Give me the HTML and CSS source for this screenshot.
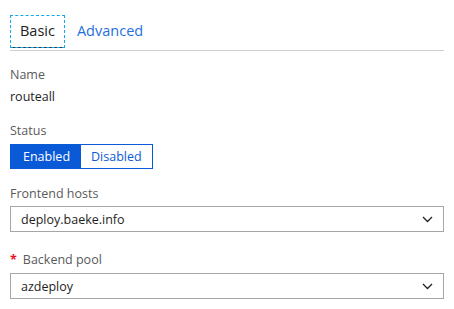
FILE: index.html
```html
<!DOCTYPE html>
<html lang="en">
<head>
  <meta charset="UTF-8" />
  <title>Routing rule</title>
  <link rel="stylesheet" href="styles.css">
</head>
<body>
  <div class="panel">
    <div class="tabs">
      <div class="tab tab-active">Basic</div>
      <div class="tab">Advanced</div>
    </div>

    <div class="field field-first">
      <div class="label">Name</div>
      <div class="value">routeall</div>
    </div>

    <div class="field">
      <div class="label">Status</div>
      <div class="toggle">
        <span class="toggle-opt toggle-on">Enabled</span>
        <span class="toggle-opt">Disabled</span>
      </div>
    </div>

    <div class="field field-hosts">
      <div class="label">Frontend hosts</div>
      <div class="select">
        <span>deploy.baeke.info</span>
        <svg class="chevron" width="11" height="7" viewBox="0 0 11 7"><path d="M1 1 L5.5 5.5 L10 1" fill="none" stroke="#222" stroke-width="1.3"/></svg>
      </div>
    </div>

    <div class="field field-pool">
      <div class="label"><span class="req">*</span>Backend pool</div>
      <div class="select">
        <span>azdeploy</span>
        <svg class="chevron" width="11" height="7" viewBox="0 0 11 7"><path d="M1 1 L5.5 5.5 L10 1" fill="none" stroke="#222" stroke-width="1.3"/></svg>
      </div>
    </div>
  </div>
</body>
</html>
```

FILE: styles.css
```css
body {
  margin: 0;
  background: #ffffff;
  font-family: 'Open Sans', 'Noto Sans', sans-serif;
  color: #1e1e1e;
}

.panel {
  width: 434px;
  padding: 15px 0 0 10px;
}

.tabs {
  display: flex;
  gap: 2px;
  border-bottom: 1px solid #d0d0d0;
  padding-bottom: 2px;
}

.tab {
  font-size: 14.5px;
  line-height: 32px;
  padding: 0 10px;
  color: #1f6fdc;
}

.tab-active {
  color: #222;
  outline: 1px dashed #12a9e6;
  outline-offset: -1px;
  border-bottom: 1px solid #333;
  height: 32px;
}

.field {
  margin-top: 16px;
}

.field-first {
  margin-top: 15px;
}

.label {
  font-size: 12.5px;
  line-height: 18px;
  color: #5a5a5a;
  margin-bottom: 4px;
}

.value {
  font-size: 12.5px;
  line-height: 18px;
  color: #1e1e1e;
}

.toggle {
  display: inline-flex;
  border: 1px solid #0a5ad8;
  height: 23px;
}

.toggle-opt {
  font-size: 12.5px;
  line-height: 23px;
  padding: 0 10px;
  color: #0a5ad8;
}

.toggle-on {
  background: #0a5ad8;
  color: #ffffff;
  padding: 0 11px 0 12px;
}

.field-hosts .label {
  margin-bottom: 3px;
}

.field-pool {
  margin-top: 19px;
}

.req {
  color: #e81123;
  margin-right: 6px;
  font-weight: bold;
}

.select {
  display: flex;
  align-items: center;
  justify-content: space-between;
  height: 24px;
  border: 1px solid #a6a6a6;
  padding: 0 10px;
  font-size: 12.5px;
  color: #1e1e1e;
}

.chevron {
  display: block;
}
```
